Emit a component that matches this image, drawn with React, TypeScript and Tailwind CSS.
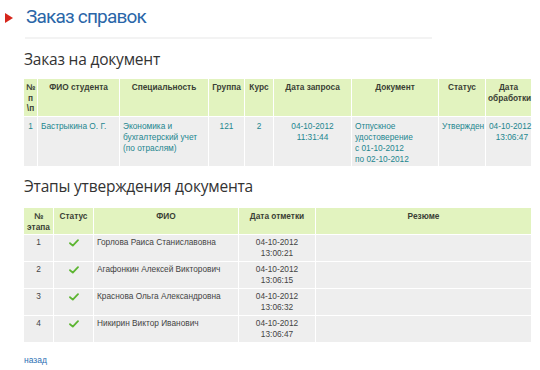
import React from 'react';

const orderCols = [
  { label: '№ п \\п', w: 'w-[13px]' },
  { label: 'ФИО студента', w: 'w-[82px]' },
  { label: 'Специальность', w: 'w-[89px]' },
  { label: 'Группа', w: 'w-[36px]' },
  { label: 'Курс', w: 'w-[29px]' },
  { label: 'Дата запроса', w: 'w-[78px]' },
  { label: 'Документ', w: 'w-[87px]' },
  { label: 'Статус', w: 'w-[47px]' },
  { label: 'Дата обработки', w: 'w-[46px]' },
];

const stages = [
  { n: 1, name: 'Горлова Раиса Станиславовна', date: '04-10-2012', time: '13:00:21' },
  { n: 2, name: 'Агафонкин Алексей Викторович', date: '04-10-2012', time: '13:06:15' },
  { n: 3, name: 'Краснова Ольга Александровна', date: '04-10-2012', time: '13:06:32' },
  { n: 4, name: 'Никирин Виктор Иванович', date: '04-10-2012', time: '13:06:47' },
];

const Check = () => (
  <svg width="10" height="8" viewBox="0 0 10 8" className="mx-auto">
    <path d="M1 4.2 L3.8 6.6 L9 1.2" fill="none" stroke="#5cb531" strokeWidth="1.8" strokeLinecap="round" strokeLinejoin="round" />
  </svg>
);

const th = 'bg-[#e2f3bf] text-[#3a3f35] font-bold text-center align-top px-[2px] pt-[3px] pb-[1px] border-b border-white';
const td = 'bg-[#eeeeee] align-top px-[3px] pt-[2px] pb-[2px]';
const td1 = 'bg-[#eeeeee] align-top px-[3px] pt-[4px] pb-[1px]';

export default function App() {
  return (
    <div className="w-[540px] h-[370px] bg-white font-['Liberation_Sans',Arial,sans-serif] overflow-hidden">
      {/* Title */}
      <div className="flex items-center pt-[3px]">
        <svg width="10" height="12" viewBox="0 0 10 12" className="ml-[4px] mr-[12px] mt-[2px]">
          <path d="M1 1 L9 6 L1 11 Z" fill="#d6261c" />
        </svg>
        <h1 className="font-['Roboto',sans-serif] text-[19px] leading-[28px] text-[#2a66a8] tracking-[-0.8px]">Заказ справок</h1>
      </div>
      <div className="ml-[25px] mt-[6px] w-[407px] h-[2px] bg-[#f3f3f3]" />

      <div className="pl-[24px] pr-[9px]">
        <h2 className="font-['Open_Sans',sans-serif] text-[15.5px] leading-[20px] text-[#333] mt-[10px] mb-[10px] tracking-[-0.2px]">Заказ на документ</h2>
        <table className="table-fixed w-[507px] border-separate border-spacing-0 text-[8.3px] leading-[11px]">
          <thead>
            <tr>
              {orderCols.map((c, i) => (
                <th key={i} className={`${th} ${c.w} ${i > 0 ? 'border-l' : ''} h-[38px] leading-[10.5px]`}>
                  {c.label}
                </th>
              ))}
            </tr>
          </thead>
          <tbody className="text-[#23868f]">
            <tr>
              <td className={`${td1} h-[49px] text-center`}>1</td>
              <td className={`${td1} border-l border-white whitespace-nowrap`}>Бастрыкина О. Г.</td>
              <td className={`${td1} border-l border-white`}>Экономика и<br />бухгалтерский учет<br />(по отраслям)</td>
              <td className={`${td1} border-l border-white text-center`}>121</td>
              <td className={`${td1} border-l border-white text-center`}>2</td>
              <td className={`${td1} border-l border-white text-center whitespace-nowrap`}>04-10-2012<br />11:31:44</td>
              <td className={`${td1} border-l border-white whitespace-nowrap`}>Отпускное<br />удостоверение<br />с 01-10-2012<br />по 02-10-2012</td>
              <td className={`${td1} border-l border-white px-[2px] whitespace-nowrap`}>Утвержден</td>
              <td className={`${td1} border-l border-white text-right px-[1px] whitespace-nowrap`}>04-10-2012<br />13:06:47</td>
            </tr>
          </tbody>
        </table>

        <h2 className="font-['Open_Sans',sans-serif] text-[15.5px] leading-[20px] text-[#333] mt-[10px] mb-[12px] tracking-[-0.2px]">Этапы утверждения документа</h2>
        <table className="table-fixed w-[507px] border-separate border-spacing-0 text-[8.3px] leading-[11px]">
          <thead>
            <tr>
              <th className={`${th} w-[29px] h-[27px]`}>№ этапа</th>
              <th className={`${th} w-[40px] border-l`}>Статус</th>
              <th className={`${th} w-[145px] border-l`}>ФИО</th>
              <th className={`${th} w-[77px] border-l`}>Дата отметки</th>
              <th className={`${th} w-[216px] border-l`}>Резюме</th>
            </tr>
          </thead>
          <tbody className="text-[#444]">
            {stages.map((s, i) => {
              const last = i === stages.length - 1;
              return (
                <tr key={s.n}>
                  <td className={`${td} text-center ${last ? 'h-[26px]' : 'h-[27px] border-b border-white'}`}>{s.n}</td>
                  <td className={`${td} border-l border-white pt-[4px] ${last ? '' : 'border-b'}`}><Check /></td>
                  <td className={`${td} border-l border-white whitespace-nowrap ${last ? '' : 'border-b'}`}>{s.name}</td>
                  <td className={`${td} border-l border-white text-center ${last ? '' : 'border-b'}`}>{s.date}<br />{s.time}</td>
                  <td className={`${td} border-l border-white ${last ? '' : 'border-b'}`}></td>
                </tr>
              );
            })}
          </tbody>
        </table>

        <a href="#" className="block mt-[13px] text-[8.5px] leading-[11px] text-[#2b6fb3]">назад</a>
      </div>
    </div>
  );
}
